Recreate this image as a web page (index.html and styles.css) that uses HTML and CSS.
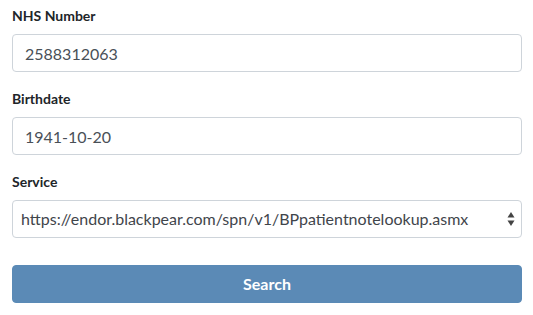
FILE: index.html
```html
<!DOCTYPE html>
<html>
<head>
<meta charset="utf-8">
<link rel="stylesheet" href="styles.css">
</head>
<body>
<form class="form">
  <div class="group">
    <label class="label">NHS Number</label>
    <input class="control" type="text" value="2588312063">
  </div>
  <div class="group">
    <label class="label">Birthdate</label>
    <input class="control" type="text" value="1941-10-20">
  </div>
  <div class="group">
    <label class="label">Service</label>
    <div class="select-wrap">
      <select class="control select">
        <option>https://endor.blackpear.com/spn/v1/BPpatientnotelookup.asmx</option>
      </select>
      <svg class="arrows" width="8" height="16" viewBox="0 0 8 16">
        <path d="M4 1 L7.5 6.5 H0.5 Z" fill="#444"/>
        <path d="M4 15 L7.5 9.5 H0.5 Z" fill="#444"/>
      </svg>
    </div>
  </div>
  <button class="btn" type="button">Search</button>
</form>
</body>
</html>
```
FILE: styles.css
```css
* { box-sizing: border-box; }
html, body { margin: 0; padding: 0; background: #fff; }
body {
  font-family: Lato, "Open Sans", sans-serif;
  font-size: 16px;
  line-height: 1.5;
  color: #212529;
}
.form {
  padding: 5px 11px 0 12px;
  display: flex;
  flex-direction: column;
}
.group {
  display: flex;
  flex-direction: column;
  margin-bottom: 16px;
}
.label {
  font-size: 14px;
  font-weight: 700;
  line-height: 21px;
  margin-bottom: 8px;
  color: #212529;
}
.control {
  display: block;
  width: 100%;
  height: 38px;
  padding: 6px 12px;
  font-family: Lato, "Open Sans", sans-serif;
  font-size: 16px;
  line-height: 24px;
  color: #495057;
  background: #fff;
  border: 1px solid #ced4da;
  border-radius: 4px;
  outline: none;
}
.select-wrap { position: relative; }
.select {
  -webkit-appearance: none;
  appearance: none;
  padding: 6px 8px;
  color: #3f454b;
}
.arrows {
  position: absolute;
  right: 7px;
  top: 11px;
}
.btn {
  margin-top: 11px;
  height: 38px;
  width: 100%;
  border: 1px solid #5a8ab6;
  border-radius: 4px;
  background: #5b8ab6;
  color: #fff;
  font-family: Lato, "Open Sans", sans-serif;
  font-size: 16px;
  font-weight: 700;
  line-height: 24px;
}
```
